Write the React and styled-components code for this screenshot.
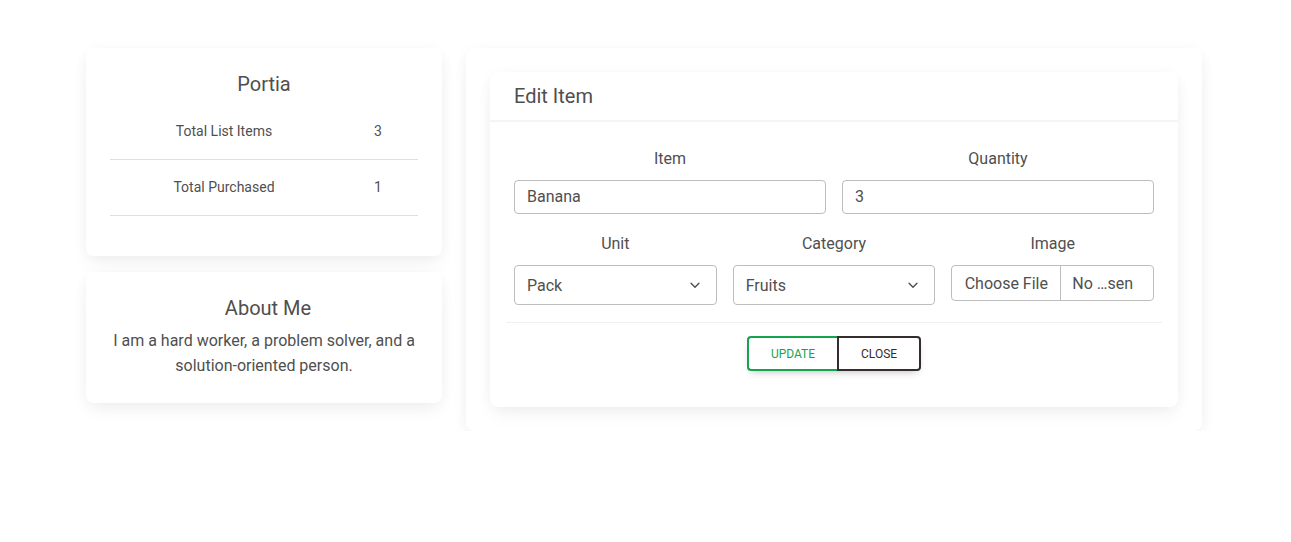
import React from "react";
import styled, { createGlobalStyle } from "styled-components";

const Global = createGlobalStyle`
	body {
		margin: 0;
		background: #fff;
		font-family: Roboto, "Liberation Sans", sans-serif;
		color: #4f4f4f;
	}
	* { box-sizing: border-box; }
`;

const Page = styled.div`
	width: 1116px;
	margin: 48px 0 0 86px;
	display: grid;
	grid-template-columns: 356px 736px;
	gap: 24px;
	align-items: start;
`;

const Column = styled.div`
	display: flex;
	flex-direction: column;
	gap: 16px;
`;

const Card = styled.div`
	background: #fff;
	border-radius: 8px;
	box-shadow: 0 2px 15px -3px rgba(0, 0, 0, 0.07),
		0 10px 20px -2px rgba(0, 0, 0, 0.04);
	padding: ${(p) => (p.flush ? "0" : "24px")};
	text-align: ${(p) => (p.center ? "center" : "left")};
`;

const Title = styled.h5`
	margin: 0 0 ${(p) => p.mb || 8}px;
	padding-left: ${(p) => p.shift || 0}px;
	font-size: 20px;
	font-weight: 400;
	line-height: 24px;
`;

const Table = styled.table`
	width: 100%;
	border-collapse: collapse;
	margin-bottom: 16px;
	font-size: 14px;
	td {
		height: 56px;
		border-bottom: 1px solid #e0e0e0;
		text-align: center;
		padding: 0;
	}
	td:first-child {
		width: 228px;
	}
`;

const About = styled.p`
	margin: 0;
	font-size: 16px;
	line-height: 25.6px;
`;

const Header = styled.div`
	padding: 12px 24px;
	border-bottom: 2px solid #f5f5f5;
	font-size: 20px;
	line-height: 24px;
`;

const Body = styled.div`
	padding: 24px;
`;

const Row = styled.div`
	display: grid;
	grid-template-columns: repeat(${(p) => p.cols}, 1fr);
	gap: 16px;
	margin-bottom: ${(p) => p.mb || 0}px;
	align-items: start;
`;

const Field = styled.div`
	display: flex;
	flex-direction: column;
`;

const Label = styled.label`
	text-align: center;
	font-size: 16px;
	line-height: 25.6px;
	margin-bottom: ${(p) => p.mb || 9}px;
`;

const Input = styled.div`
	height: ${(p) => p.h || 34}px;
	border: 1px solid #bdbdbd;
	border-radius: 4px;
	font-size: 16px;
	color: #4f4f4f;
	display: flex;
	align-items: center;
	justify-content: space-between;
	padding: 0 ${(p) => (p.select ? 14 : 12)}px 0 12px;
`;

const FileBox = styled.div`
	height: 36px;
	border: 1px solid #bdbdbd;
	border-radius: 4px;
	display: flex;
	font-size: 16px;
	overflow: hidden;
`;

const FileBtn = styled.span`
	width: 109px;
	border-right: 1px solid #bdbdbd;
	display: flex;
	align-items: center;
	justify-content: center;
`;

const FileName = styled.span`
	display: flex;
	align-items: center;
	padding-left: 11px;
`;

const Divider = styled.hr`
	border: 0;
	border-top: 1px solid #f0f0f0;
	margin: 17px -8px 13px;
`;

const Group = styled.div`
	display: flex;
	justify-content: center;
	margin-bottom: 12px;
`;

const Buttons = styled.div`
	display: flex;
	border-radius: 4px;
	box-shadow: 0 4px 9px -4px rgba(0, 0, 0, 0.3);
`;

const Btn = styled.button`
	height: 35px;
	background: #fff;
	border: 2px solid ${(p) => p.color};
	color: ${(p) => p.color};
	font-family: Roboto, "Liberation Sans", sans-serif;
	font-size: 12px;
	font-weight: 400;
	text-transform: uppercase;
	padding: 0 ${(p) => p.px}px;
	border-radius: ${(p) => (p.first ? "4px 0 0 4px" : "0 4px 4px 0")};
	${(p) => (p.first ? "border-right: 0;" : "")}
	cursor: pointer;
`;

const Chevron = () => (
	<svg width="14" height="14" viewBox="0 0 16 16" fill="none">
		<path d="M3.5 6l4.5 4.5L12.5 6" stroke="#4f4f4f" strokeWidth="1.6" strokeLinecap="round" strokeLinejoin="round" />
	</svg>
);

export default function App() {
	return (
		<>
			<Global />
			<Page>
				<Column>
					<Card center>
						<Title mb={7}>Portia</Title>
						<Table>
							<tbody>
								<tr>
									<td>Total List Items</td>
									<td>3</td>
								</tr>
								<tr>
									<td>Total Purchased</td>
									<td>1</td>
								</tr>
							</tbody>
						</Table>
					</Card>
					<Card center>
						<Title shift={8}>About Me</Title>
						<About>
							I am a hard worker, a problem solver, and a solution-oriented person.
						</About>
					</Card>
				</Column>
				<Card>
					<Card flush>
						<Header>Edit Item</Header>
						<Body>
							<Row cols={2} mb={17}>
								<Field>
									<Label mb={8}>Item</Label>
									<Input>Banana</Input>
								</Field>
								<Field>
									<Label mb={8}>Quantity</Label>
									<Input>3</Input>
								</Field>
							</Row>
							<Row cols={3}>
								<Field>
									<Label>Unit</Label>
									<Input h={40} select>
										Pack <Chevron />
									</Input>
								</Field>
								<Field>
									<Label>Category</Label>
									<Input h={40} select>
										Fruits <Chevron />
									</Input>
								</Field>
								<Field>
									<Label>Image</Label>
									<FileBox>
										<FileBtn>Choose File</FileBtn>
										<FileName>No …sen</FileName>
									</FileBox>
								</Field>
							</Row>
							<Divider />
							<Group>
								<Buttons>
									<Btn first color="#14a44d" px={22}>Update</Btn>
									<Btn color="#332d2d" px={22}>Close</Btn>
								</Buttons>
							</Group>
						</Body>
					</Card>
				</Card>
			</Page>
		</>
	);
}
